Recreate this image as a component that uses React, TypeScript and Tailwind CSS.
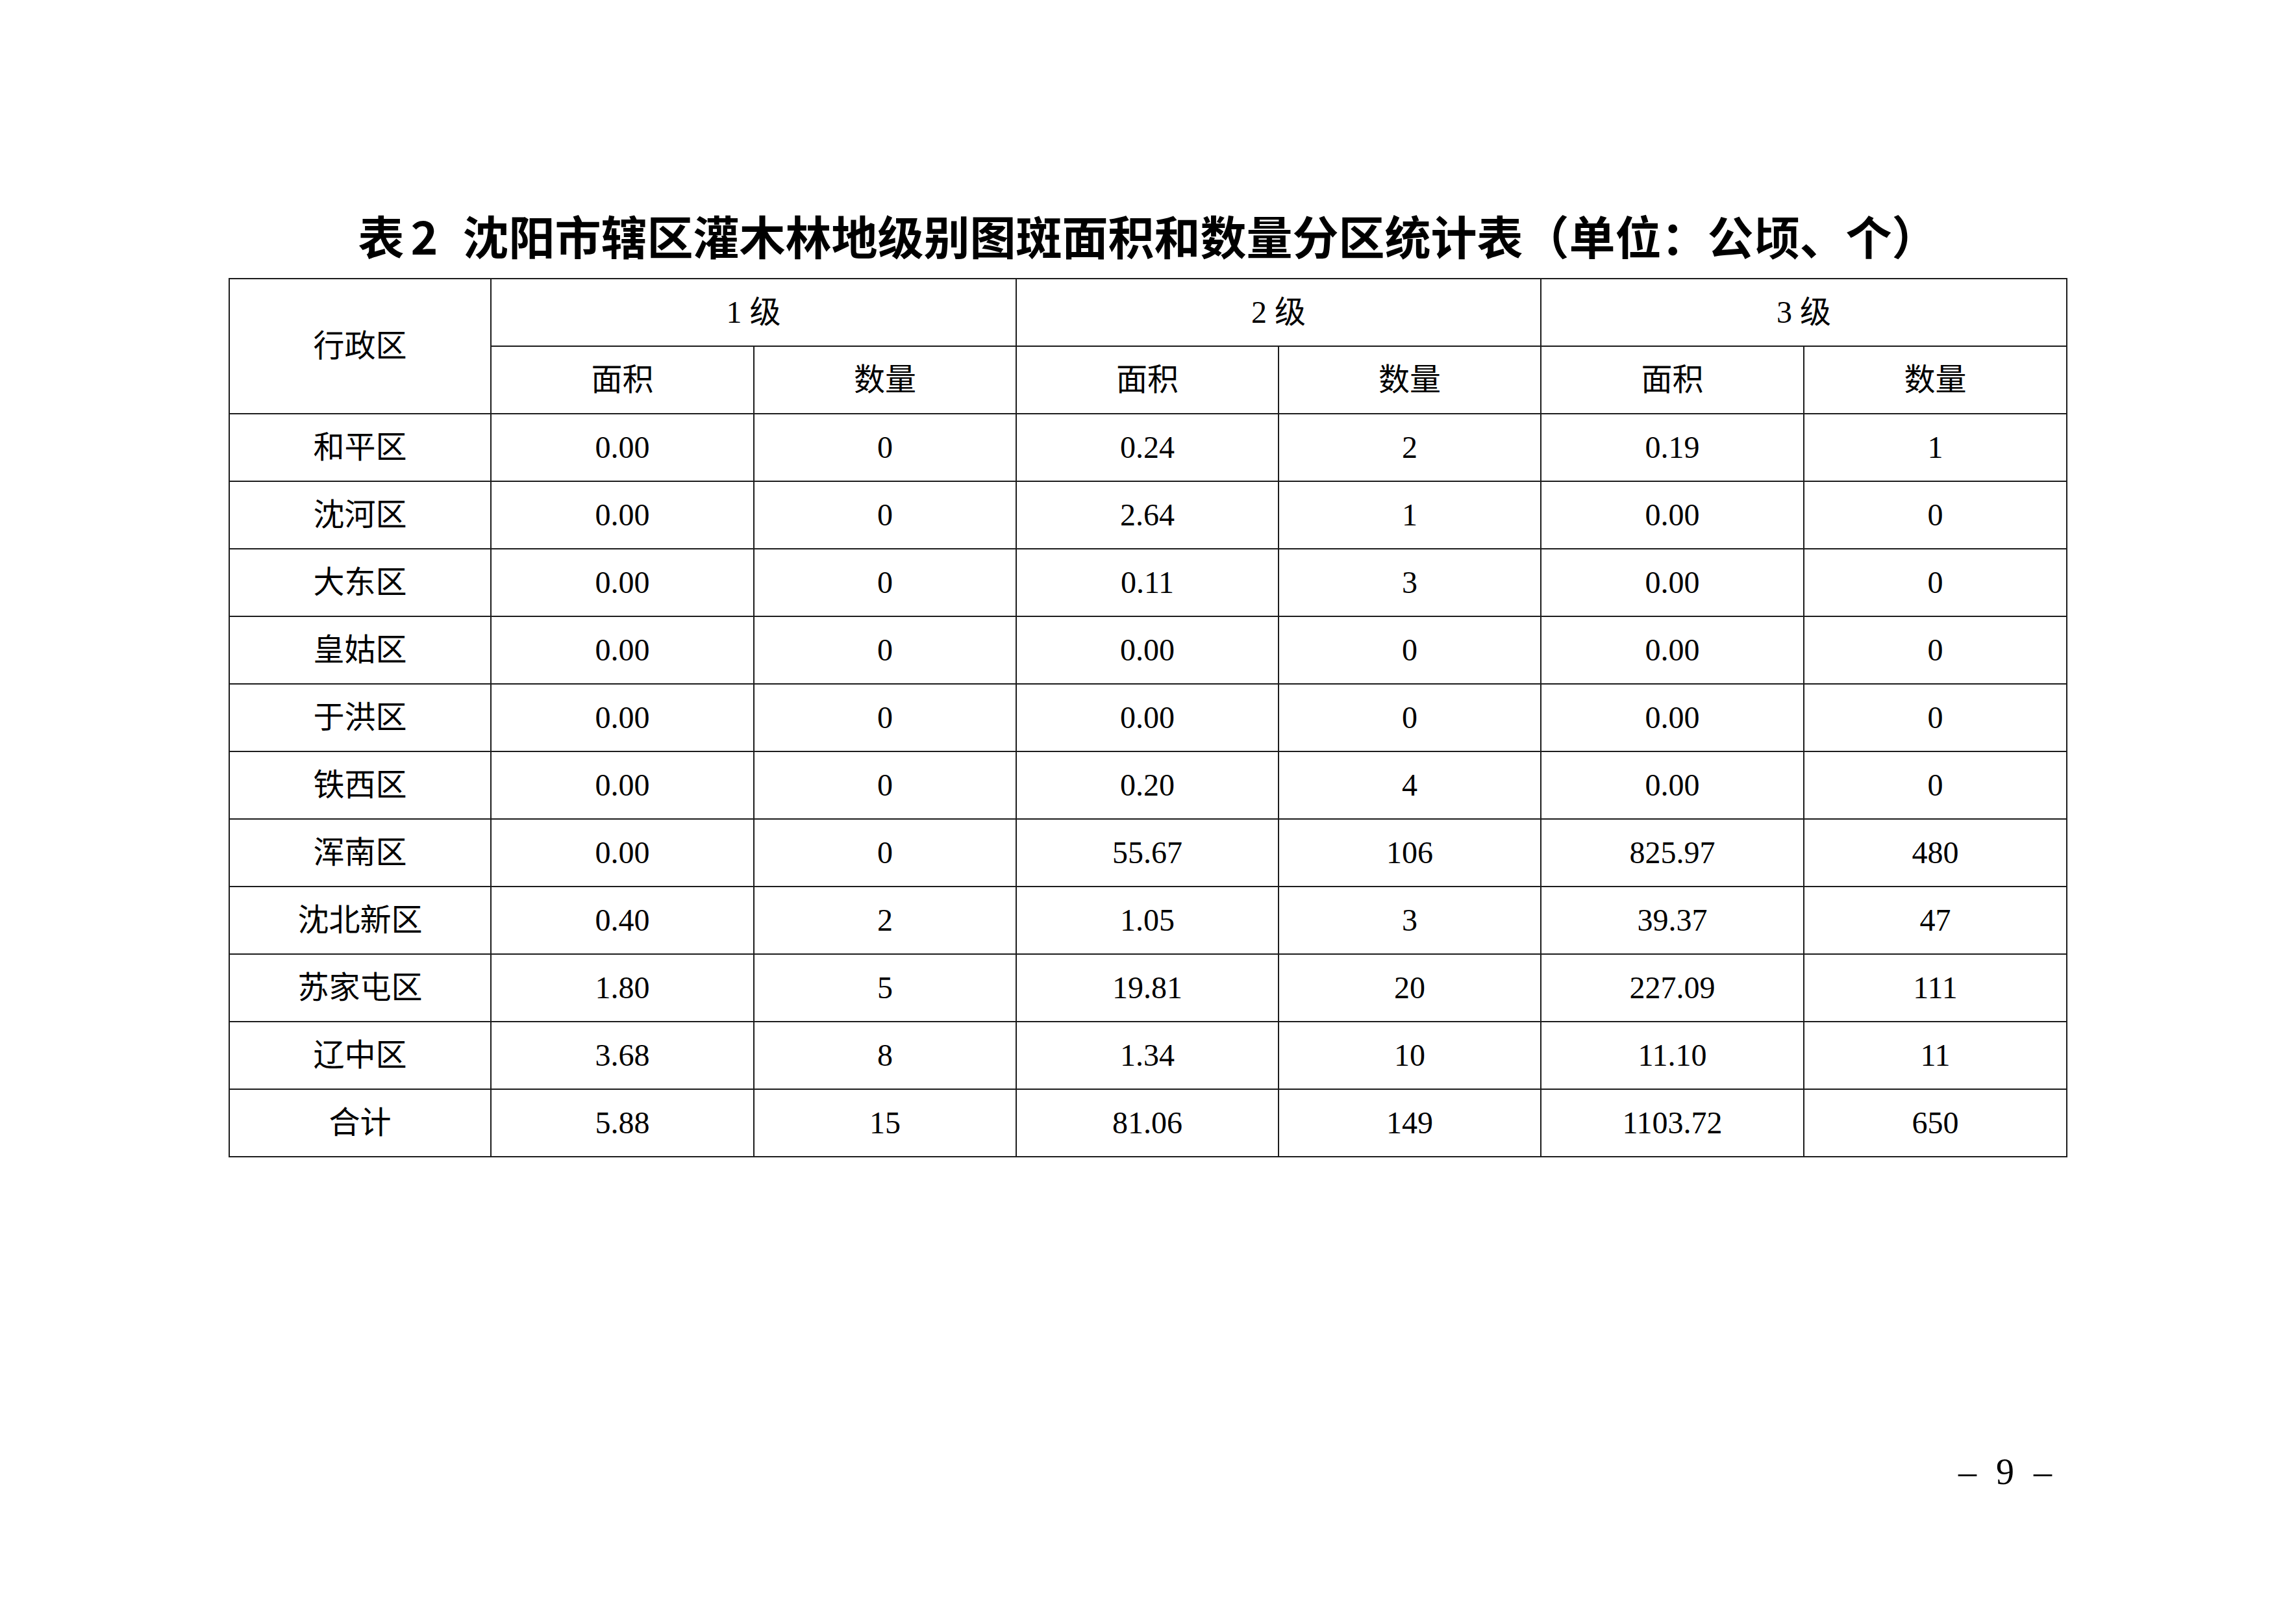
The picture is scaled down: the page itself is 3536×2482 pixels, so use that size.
import React from "react";

const rows: string[][] = [
  ["和平区", "0.00", "0", "0.24", "2", "0.19", "1"],
  ["沈河区", "0.00", "0", "2.64", "1", "0.00", "0"],
  ["大东区", "0.00", "0", "0.11", "3", "0.00", "0"],
  ["皇姑区", "0.00", "0", "0.00", "0", "0.00", "0"],
  ["于洪区", "0.00", "0", "0.00", "0", "0.00", "0"],
  ["铁西区", "0.00", "0", "0.20", "4", "0.00", "0"],
  ["浑南区", "0.00", "0", "55.67", "106", "825.97", "480"],
  ["沈北新区", "0.40", "2", "1.05", "3", "39.37", "47"],
  ["苏家屯区", "1.80", "5", "19.81", "20", "227.09", "111"],
  ["辽中区", "3.68", "8", "1.34", "10", "11.10", "11"],
  ["合计", "5.88", "15", "81.06", "149", "1103.72", "650"],
];

const cell = "border-2 border-[#1c1c1c] text-center align-middle p-0";

export default function App() {
  return (
    <div className="w-[3536px] h-[2482px] bg-white text-black flex flex-col items-center">
      <div
        className="mt-[326px] h-[71px] leading-[71px] text-[71px] font-bold whitespace-nowrap flex"
        style={{ fontFamily: '"Noto Sans CJK SC", "Liberation Sans", sans-serif' }}
      >
        <span>表</span>
        <span className="ml-[10px] mr-[38px]">2</span>
        <span>沈阳市辖区灌木林地级别图斑面积和数量分区统计表（单位：公顷、个）</span>
      </div>
      <table
        className="mt-[31px] w-[2830px] table-fixed border-collapse text-[48px] leading-none"
        style={{ fontFamily: '"Liberation Serif", "Noto Sans CJK SC", serif' }}
      >
        <colgroup>
          <col className="w-[403px]" />
          <col className="w-[405px]" />
          <col className="w-[404px]" />
          <col className="w-[404px]" />
          <col className="w-[404px]" />
          <col className="w-[405px]" />
          <col className="w-[405px]" />
        </colgroup>
        <tbody>
          <tr className="h-[104px]">
            <td rowSpan={2} className={cell}>行政区</td>
            <td colSpan={2} className={cell}>1 级</td>
            <td colSpan={2} className={cell}>2 级</td>
            <td colSpan={2} className={cell}>3 级</td>
          </tr>
          <tr className="h-[104px]">
            <td className={cell}>面积</td>
            <td className={cell}>数量</td>
            <td className={cell}>面积</td>
            <td className={cell}>数量</td>
            <td className={cell}>面积</td>
            <td className={cell}>数量</td>
          </tr>
          {rows.map((r) => (
            <tr key={r[0]} className="h-[104px]">
              {r.map((v, i) => (
                <td key={i} className={cell}>{v}</td>
              ))}
            </tr>
          ))}
        </tbody>
      </table>
      <div className="w-full flex justify-end pr-[376px] mt-[456px]">
        <div
          className="flex items-center gap-[30px] text-[56px] leading-[56px]"
          style={{ fontFamily: '"Liberation Serif", serif' }}
        >
          <span>–</span>
          <span>9</span>
          <span>–</span>
        </div>
      </div>
    </div>
  );
}
